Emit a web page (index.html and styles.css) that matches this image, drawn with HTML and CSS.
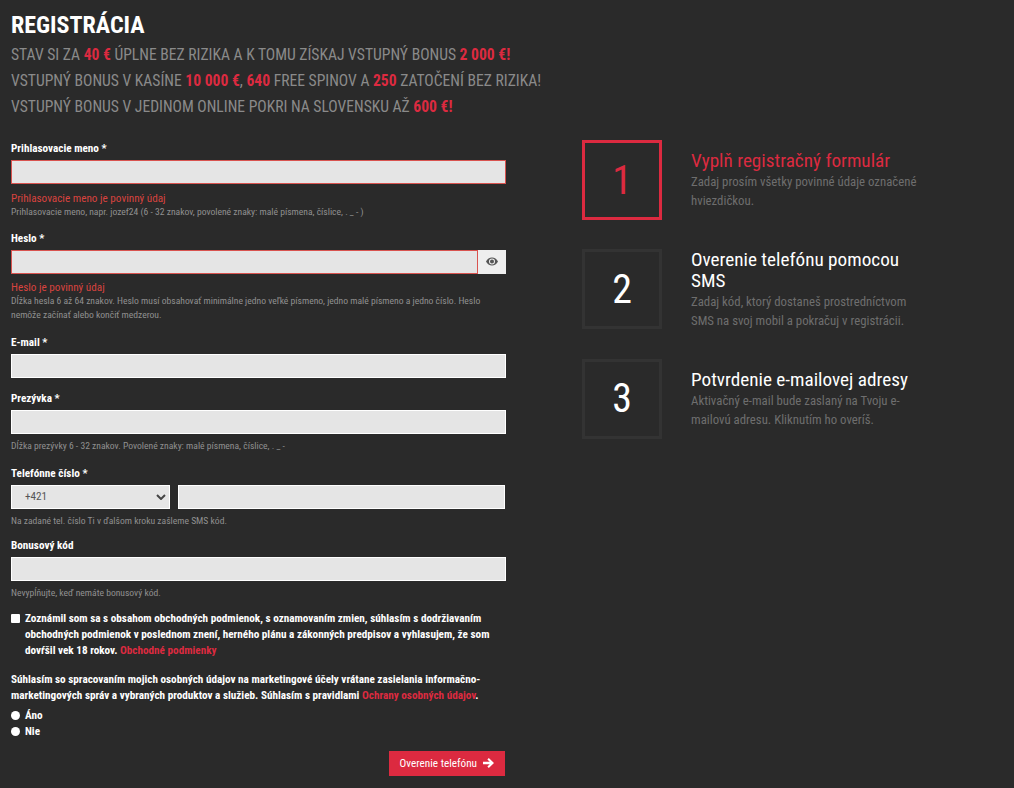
FILE: index.html
```html
<!DOCTYPE html>
<html lang="sk">
<head>
    <meta charset="UTF-8">
    <title>Registrácia</title>
    <link rel="stylesheet" href="styles.css">
</head>
<body>
    <div class="page">
        <h1>REGISTRÁCIA</h1>
        <div class="lead">
            <p>STAV SI ZA <b>40 €</b> ÚPLNE BEZ RIZIKA A K TOMU ZÍSKAJ VSTUPNÝ BONUS <b>2 000 €!</b></p>
            <p>VSTUPNÝ BONUS V KASÍNE <b>10 000 €</b>, <b>640</b> FREE SPINOV A <b>250</b> ZATOČENÍ BEZ RIZIKA!</p>
            <p>VSTUPNÝ BONUS V JEDINOM ONLINE POKRI NA SLOVENSKU AŽ <b>600 €!</b></p>
        </div>

        <div class="columns">
            <form class="form">
                <div class="field field-error">
                    <label>Prihlasovacie meno *</label>
                    <input type="text">
                    <div class="error">Prihlasovacie meno je povinný údaj</div>
                    <div class="hint">Prihlasovacie meno, napr. jozef24 (6 - 32 znakov, povolené znaky: malé písmena, číslice, . _ - )</div>
                </div>

                <div class="field field-error">
                    <label>Heslo *</label>
                    <div class="password">
                        <input type="password">
                        <span class="eye">
                            <svg width="12" height="9" viewBox="0 0 24 18"><path fill="#555" fill-rule="evenodd" d="M12 1C6.8 1 2.6 4 0.3 8.300a1.500 1.500 0 0 0 0 1.400C2.600 14 6.800 17 12 17s9.400-3 11.700-7.300a1.500 1.500 0 0 0 0-1.400C21.400 4 17.200 1 12 1zm0 14a6 6 0 1 1 0-12 6 6 0 0 1 0 12zm0-10a4 4 0 1 0 0 8 4 4 0 0 0 0-8z"/></svg>
                        </span>
                    </div>
                    <div class="error">Heslo je povinný údaj</div>
                    <div class="hint">Dĺžka hesla 6 až 64 znakov. Heslo musí obsahovať minimálne jedno veľké písmeno, jedno malé písmeno a jedno číslo. Heslo nemôže začínať alebo končiť medzerou.</div>
                </div>

                <div class="field">
                    <label>E-mail *</label>
                    <input type="text">
                </div>

                <div class="field">
                    <label>Prezývka *</label>
                    <input type="text">
                    <div class="hint">Dĺžka prezývky 6 - 32 znakov. Povolené znaky: malé písmena, číslice, . _ -</div>
                </div>

                <div class="field field-tight">
                    <label>Telefónne číslo *</label>
                    <div class="phone">
                        <div class="select">
                            +421
                            <svg width="10" height="6" viewBox="0 0 10 6"><path fill="none" stroke="#444" stroke-width="2" d="M1 1l4 4 4-4"/></svg>
                        </div>
                        <input type="text">
                    </div>
                    <div class="hint">Na zadané tel. číslo Ti v ďalšom kroku zašleme SMS kód.</div>
                </div>

                <div class="field field-tight">
                    <label>Bonusový kód</label>
                    <input type="text">
                    <div class="hint">Nevypĺňujte, keď nemáte bonusový kód.</div>
                </div>

                <div class="terms">
                    <span class="box"></span>
                    <p>Zoznámil som sa s obsahom obchodných podmienok, s oznamovaním zmien, súhlasím s dodržiavaním obchodných podmienok v poslednom znení, herného plánu a zákonných predpisov a vyhlasujem, že som dovŕšil vek 18 rokov. <a href="#">Obchodné podmienky</a></p>
                </div>

                <p class="consent">Súhlasím so spracovaním mojich osobných údajov na marketingové účely vrátane zasielania informačno-marketingových správ a vybraných produktov a služieb. Súhlasím s pravidlami <a href="#">Ochrany osobných údajov</a>.</p>
                <div class="radio"><span class="dot"></span>Áno</div>
                <div class="radio"><span class="dot"></span>Nie</div>

                <div class="actions">
                    <a href="#" class="button">Overenie telefónu
                        <svg width="11" height="10" viewBox="0 0 11 10"><path fill="#fff" d="M5.800 0L11 5 5.800 10 4.400 8.600 6.800 6.200H0V3.800h6.800L4.400 1.400z"/></svg>
                    </a>
                </div>
            </form>

            <div class="steps">
                <div class="step active">
                    <div class="num">1</div>
                    <div class="step-text">
                        <h3>Vyplň registračný formulár</h3>
                        <p>Zadaj prosím všetky povinné údaje označené hviezdičkou.</p>
                    </div>
                </div>
                <div class="step">
                    <div class="num">2</div>
                    <div class="step-text">
                        <h3>Overenie telefónu pomocou SMS</h3>
                        <p>Zadaj kód, ktorý dostaneš prostredníctvom SMS na svoj mobil a pokračuj v registrácii.</p>
                    </div>
                </div>
                <div class="step">
                    <div class="num">3</div>
                    <div class="step-text">
                        <h3>Potvrdenie e-mailovej adresy</h3>
                        <p>Aktivačný e-mail bude zaslaný na Tvoju e-mailovú adresu. Kliknutím ho overíš.</p>
                    </div>
                </div>
            </div>
        </div>
    </div>
</body>
</html>
```

FILE: styles.css
```css
body {
    font-family: "Roboto Condensed", "Liberation Sans Narrow", Roboto, sans-serif;
    font-stretch: condensed;
    background-color: #2a2a2a;
    color: #fff;
    margin: 0;
    padding: 0;
}

.page {
    padding: 11px 11px 0;
}

h1 {
    font-size: 24px;
    line-height: 28px;
    font-weight: 700;
    margin: 0 0 3px;
}

.lead p {
    margin: 0;
    font-size: 15.600px;
    line-height: 26px;
    color: #8a8a8a;
}

.lead b, a {
    color: #dc2a40;
    text-decoration: none;
}

.columns {
    display: flex;
    margin-top: 20px;
}

.form {
    width: 495px;
    padding-top: 1.500px;
}

.field {
    margin-bottom: 14px;
}

.field-error {
    margin-bottom: 13.500px;
}

.field-tight {
    margin-bottom: 11px;
}

label {
    display: block;
    font-size: 11.200px;
    line-height: 13px;
    font-weight: 700;
    margin-bottom: 5px;
}

input {
    display: block;
    width: 100%;
    height: 24px;
    box-sizing: border-box;
    background-color: #e5e5e5;
    border: 1px solid #fff;
    border-radius: 0;
    margin: 0;
    padding: 0 8px;
}

.field-error input {
    border-color: #d9534f;
}

.error {
    font-size: 11.200px;
    line-height: 13px;
    color: #d9433f;
    margin-top: 7.500px;
}

.field-error:first-child {
    margin-bottom: 12.500px;
}

.field-error:first-child .error {
    margin-top: 8.500px;
}

.error + .hint {
    margin-top: 0;
}

.hint {
    font-size: 9.600px;
    line-height: 14px;
    color: #909090;
    margin-top: 5px;
}

.password {
    display: flex;
}

.eye {
    width: 28px;
    flex: none;
    background-color: #eee;
    display: flex;
    align-items: center;
    justify-content: center;
}

.phone {
    display: flex;
    justify-content: space-between;
    padding-right: 1px;
}

.phone input {
    width: 327px;
}

.select {
    width: 159px;
    height: 24px;
    box-sizing: border-box;
    background-color: #e5e5e5;
    border: 1px solid #fff;
    color: #555;
    font-size: 11.200px;
    line-height: 22px;
    padding: 0 3px 0 13px;
    display: flex;
    justify-content: space-between;
    align-items: center;
}

.terms {
    display: flex;
    margin-top: 2.500px;
}

.box {
    width: 9px;
    height: 9px;
    flex: none;
    background-color: #fff;
    border-radius: 1px;
    margin: 3px 5px 0 0;
}

.terms p, .consent {
    margin: 0;
    font-size: 11.200px;
    line-height: 16px;
    font-weight: 700;
}

.consent {
    margin-top: 13px;
}

.radio {
    display: flex;
    align-items: center;
    font-size: 11.200px;
    font-weight: 700;
    line-height: 16px;
}

.dot {
    width: 9px;
    height: 9px;
    border-radius: 50%;
    background-color: #fff;
    margin-right: 5px;
}

.consent + .radio {
    margin-top: 4px;
}

.actions {
    display: flex;
    justify-content: flex-end;
    margin-top: 11px;
    padding-right: 1px;
}

.button {
    background-color: #dc2a40;
    color: #fff;
    font-size: 11.200px;
    line-height: 25px;
    padding: 0 11px;
    display: flex;
    align-items: center;
    gap: 6px;
}

.steps {
    margin-left: 76px;
    width: 340px;
}

.step {
    display: flex;
    align-items: center;
    height: 80px;
    margin-bottom: 29.400px;
}

.num {
    width: 80px;
    height: 80px;
    box-sizing: border-box;
    flex: none;
    border: 3px solid #333;
    font-size: 40px;
    font-weight: 400;
    display: flex;
    align-items: center;
    justify-content: center;
}

.step-text {
    margin-left: 29px;
    width: 240px;
}

.step h3 {
    margin: 0 0 1px;
    font-size: 19.200px;
    line-height: 21px;
    font-weight: 400;
}

.step p {
    margin: 0;
    font-size: 12.800px;
    line-height: 19px;
    color: #6e6e6e;
}

.step.active .num {
    border-color: #dc2a40;
    color: #dc2a40;
}

.step.active h3 {
    color: #dc2a40;
}
```
